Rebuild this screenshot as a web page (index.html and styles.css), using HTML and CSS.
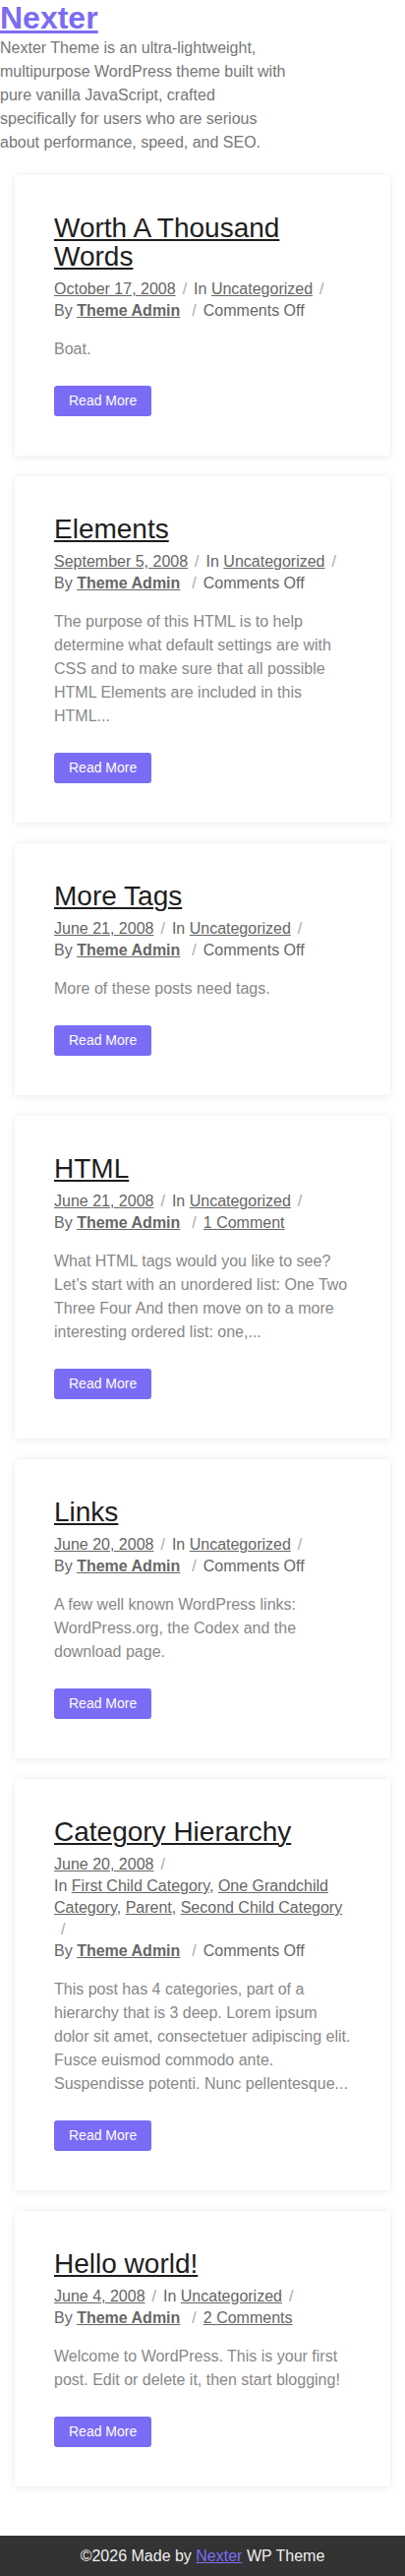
FILE: index.html
```html
<!DOCTYPE html>
<html lang="en">
<head>
<meta charset="utf-8">
<title>Nexter</title>
<link rel="stylesheet" href="styles.css">
</head>
<body>
<header class="site-header">
  <h1 class="site-title"><a href="#">Nexter</a></h1>
  <p class="site-desc">Nexter Theme is an ultra-lightweight, multipurpose WordPress theme built with pure vanilla JavaScript, crafted specifically for users who are serious about performance, speed, and SEO.</p>
</header>

<main class="posts">
  <article class="card">
    <h2 class="card-title"><a href="#">Worth A Thousand Words</a></h2>
    <div class="meta">
      <span class="m-item"><a href="#">October 17, 2008</a><span class="sep">/</span></span>
      <span class="m-item">In <a href="#">Uncategorized</a><span class="sep">/</span></span>
      <span class="m-item">By <a href="#"><b>Theme Admin</b></a><span class="sep wide">/</span></span>
      <span class="m-item">Comments Off</span>
    </div>
    <p class="excerpt">Boat.</p>
    <a href="#" class="btn">Read More</a>
  </article>

  <article class="card">
    <h2 class="card-title"><a href="#">Elements</a></h2>
    <div class="meta">
      <span class="m-item"><a href="#">September 5, 2008</a><span class="sep">/</span></span>
      <span class="m-item">In <a href="#">Uncategorized</a><span class="sep">/</span></span>
      <span class="m-item">By <a href="#"><b>Theme Admin</b></a><span class="sep wide">/</span></span>
      <span class="m-item">Comments Off</span>
    </div>
    <p class="excerpt">The purpose of this HTML is to help determine what default settings are with CSS and to make sure that all possible HTML Elements are included in this HTML...</p>
    <a href="#" class="btn">Read More</a>
  </article>

  <article class="card">
    <h2 class="card-title"><a href="#">More Tags</a></h2>
    <div class="meta">
      <span class="m-item"><a href="#">June 21, 2008</a><span class="sep">/</span></span>
      <span class="m-item">In <a href="#">Uncategorized</a><span class="sep">/</span></span>
      <span class="m-item">By <a href="#"><b>Theme Admin</b></a><span class="sep wide">/</span></span>
      <span class="m-item">Comments Off</span>
    </div>
    <p class="excerpt">More of these posts need tags.</p>
    <a href="#" class="btn">Read More</a>
  </article>

  <article class="card">
    <h2 class="card-title"><a href="#">HTML</a></h2>
    <div class="meta">
      <span class="m-item"><a href="#">June 21, 2008</a><span class="sep">/</span></span>
      <span class="m-item">In <a href="#">Uncategorized</a><span class="sep">/</span></span>
      <span class="m-item">By <a href="#"><b>Theme Admin</b></a><span class="sep wide">/</span></span>
      <span class="m-item"><a href="#">1 Comment</a></span>
    </div>
    <p class="excerpt">What HTML tags would you like to see? Let’s start with an unordered list: One Two Three Four And then move on to a more interesting ordered list: one,...</p>
    <a href="#" class="btn">Read More</a>
  </article>

  <article class="card">
    <h2 class="card-title"><a href="#">Links</a></h2>
    <div class="meta">
      <span class="m-item"><a href="#">June 20, 2008</a><span class="sep">/</span></span>
      <span class="m-item">In <a href="#">Uncategorized</a><span class="sep">/</span></span>
      <span class="m-item">By <a href="#"><b>Theme Admin</b></a><span class="sep wide">/</span></span>
      <span class="m-item">Comments Off</span>
    </div>
    <p class="excerpt">A few well known WordPress links: WordPress.org, the Codex and the download page.</p>
    <a href="#" class="btn">Read More</a>
  </article>

  <article class="card">
    <h2 class="card-title"><a href="#">Category Hierarchy</a></h2>
    <div class="meta">
      <span class="m-item"><a href="#">June 20, 2008</a><span class="sep">/</span></span>
      <span class="m-item">In <a href="#">First Child Category</a>, <a href="#">One Grandchild Category</a>, <a href="#">Parent</a>, <a href="#">Second Child Category</a> <span class="sep">/</span></span>
      <span class="m-item">By <a href="#"><b>Theme Admin</b></a><span class="sep wide">/</span></span>
      <span class="m-item">Comments Off</span>
    </div>
    <p class="excerpt">This post has 4 categories, part of a hierarchy that is 3 deep. Lorem ipsum dolor sit amet, consectetuer adipiscing elit. Fusce euismod commodo ante. Suspendisse potenti. Nunc pellentesque...</p>
    <a href="#" class="btn">Read More</a>
  </article>

  <article class="card">
    <h2 class="card-title"><a href="#">Hello world!</a></h2>
    <div class="meta">
      <span class="m-item"><a href="#">June 4, 2008</a><span class="sep">/</span></span>
      <span class="m-item">In <a href="#">Uncategorized</a><span class="sep">/</span></span>
      <span class="m-item">By <a href="#"><b>Theme Admin</b></a><span class="sep wide">/</span></span>
      <span class="m-item"><a href="#">2 Comments</a></span>
    </div>
    <p class="excerpt">Welcome to WordPress. This is your first post. Edit or delete it, then start blogging!</p>
    <a href="#" class="btn">Read More</a>
  </article>
</main>

<footer class="site-footer">
  <p>©2026 Made by <a href="#">Nexter</a> WP Theme</p>
</footer>
</body>
</html>
```

FILE: styles.css
```css
* { box-sizing: border-box; }

html, body {
  margin: 0;
  padding: 0;
  background: #fff;
}

body {
  font-family: "Liberation Sans", Arial, sans-serif;
  font-size: 16px;
  color: #666;
}

.site-header {
  padding: 0;
}

.site-title {
  margin: 0;
  font-size: 32px;
  line-height: 37px;
  font-weight: 700;
}

.site-title a {
  color: #7b6cf3;
  text-decoration: underline;
}

.site-desc {
  margin: 0;
  max-width: 293px;
  font-size: 16px;
  line-height: 24px;
  color: #777;
}

.posts {
  display: flex;
  flex-direction: column;
  gap: 21px;
  padding: 21px 15px 50px;
}

.card {
  background: #fff;
  padding: 39px 40px 40px;
  box-shadow: 0 1px 8px rgba(0, 0, 0, 0.09);
}

.card-title {
  margin: 0 0 8px;
  font-size: 28px;
  line-height: 29px;
  font-weight: 400;
}

.card-title a {
  color: #1e1e1e;
  text-decoration: underline;
  text-decoration-thickness: 2px;
  text-underline-offset: 2px;
}

.meta {
  display: flex;
  flex-wrap: wrap;
  align-items: baseline;
  font-size: 16px;
  line-height: 22px;
  color: #666;
}

.meta a {
  color: #666;
  text-decoration: underline;
}

.meta b {
  font-weight: 700;
}

.sep {
  margin: 0 7px;
  color: #aaa;
}

.sep.wide {
  margin-left: 12px;
}

.excerpt {
  margin: 16px 0 25px;
  font-size: 16px;
  line-height: 24px;
  color: #888;
}

.btn {
  display: inline-block;
  background: #7b6cf6;
  color: #fff;
  font-size: 14px;
  line-height: 17px;
  padding: 7px 15px;
  border-radius: 3px;
  text-decoration: none;
}

.site-footer {
  background: #333;
  padding: 0;
}

.site-footer p {
  margin: 0;
  height: 41px;
  line-height: 41px;
  text-align: center;
  font-size: 16px;
  color: #eee;
}

.site-footer a {
  color: #7b6cf3;
  text-decoration: underline;
}
```
